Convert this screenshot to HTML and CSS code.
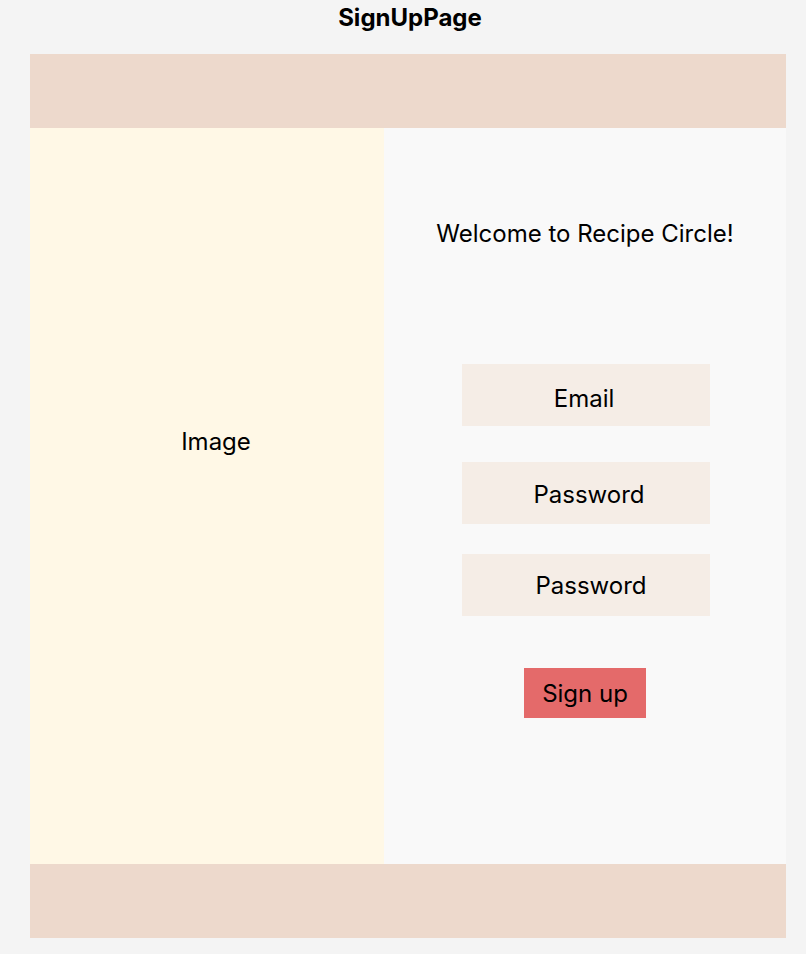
FILE: index.html
```html
<!DOCTYPE html>
<html lang="en">
<head>
<meta charset="utf-8">
<title>SignUpPage</title>
<link rel="stylesheet" href="styles.css">
</head>
<body>
<div class="page">
  <h1 class="title">SignUpPage</h1>
  <div class="frame">
    <header class="band"></header>
    <main class="body">
      <section class="image-panel">
        <span class="image-label">Image</span>
      </section>
      <section class="form-panel">
        <p class="welcome">Welcome to Recipe Circle!</p>
        <div class="field field-email">Email</div>
        <div class="field field-pass1">Password</div>
        <div class="field field-pass2">Password</div>
        <button class="signup" type="button">Sign up</button>
      </section>
    </main>
    <footer class="band"></footer>
  </div>
</div>
</body>
</html>
```
FILE: styles.css
```css
* { box-sizing: border-box; }
html, body {
  margin: 0;
  padding: 0;
  background: #f4f4f4;
  font-family: Inter, "Noto Sans", sans-serif;
  color: #000;
}
.page {
  width: 756px;
  margin-left: 30px;
  padding-bottom: 16px;
}
.title {
  margin: 0;
  height: 54px;
  padding-top: 3px;
  padding-left: 4px;
  text-align: center;
  font-size: 24px;
  font-weight: 700;
  line-height: 30px;
  color: #000;
}
.frame {
  display: flex;
  flex-direction: column;
}
.band {
  height: 74px;
  background: #edd9cc;
}
.body {
  display: flex;
  height: 736px;
}
.image-panel {
  width: 354px;
  background: #fff8e6;
  display: flex;
  justify-content: center;
  padding-top: 299px;
  padding-left: 18px;
}
.image-label {
  font-size: 24px;
  line-height: 30px;
  height: 30px;
}
.form-panel {
  flex: 1;
  background: #f9f9f9;
  display: flex;
  flex-direction: column;
  align-items: center;
  padding-top: 90px;
}
.welcome {
  margin: 0;
  font-size: 24px;
  line-height: 32px;
  height: 32px;
}
.field {
  width: 248px;
  height: 62px;
  background: #f5ede6;
  display: flex;
  align-items: center;
  justify-content: center;
  font-size: 24px;
  margin-left: 2px;
}
.field-email { margin-top: 114px; padding-right: 4px; padding-top: 6px; }
.field-pass1 { margin-top: 36px; padding-left: 6px; padding-top: 2px; }
.field-pass2 { margin-top: 30px; padding-left: 10px; }
.signup {
  margin-top: 52px;
  width: 122px;
  height: 50px;
  border: 0;
  padding: 0;
  background: #e46a6a;
  color: #000;
  font-family: Inter, "Noto Sans", sans-serif;
  font-size: 24px;
}
```
